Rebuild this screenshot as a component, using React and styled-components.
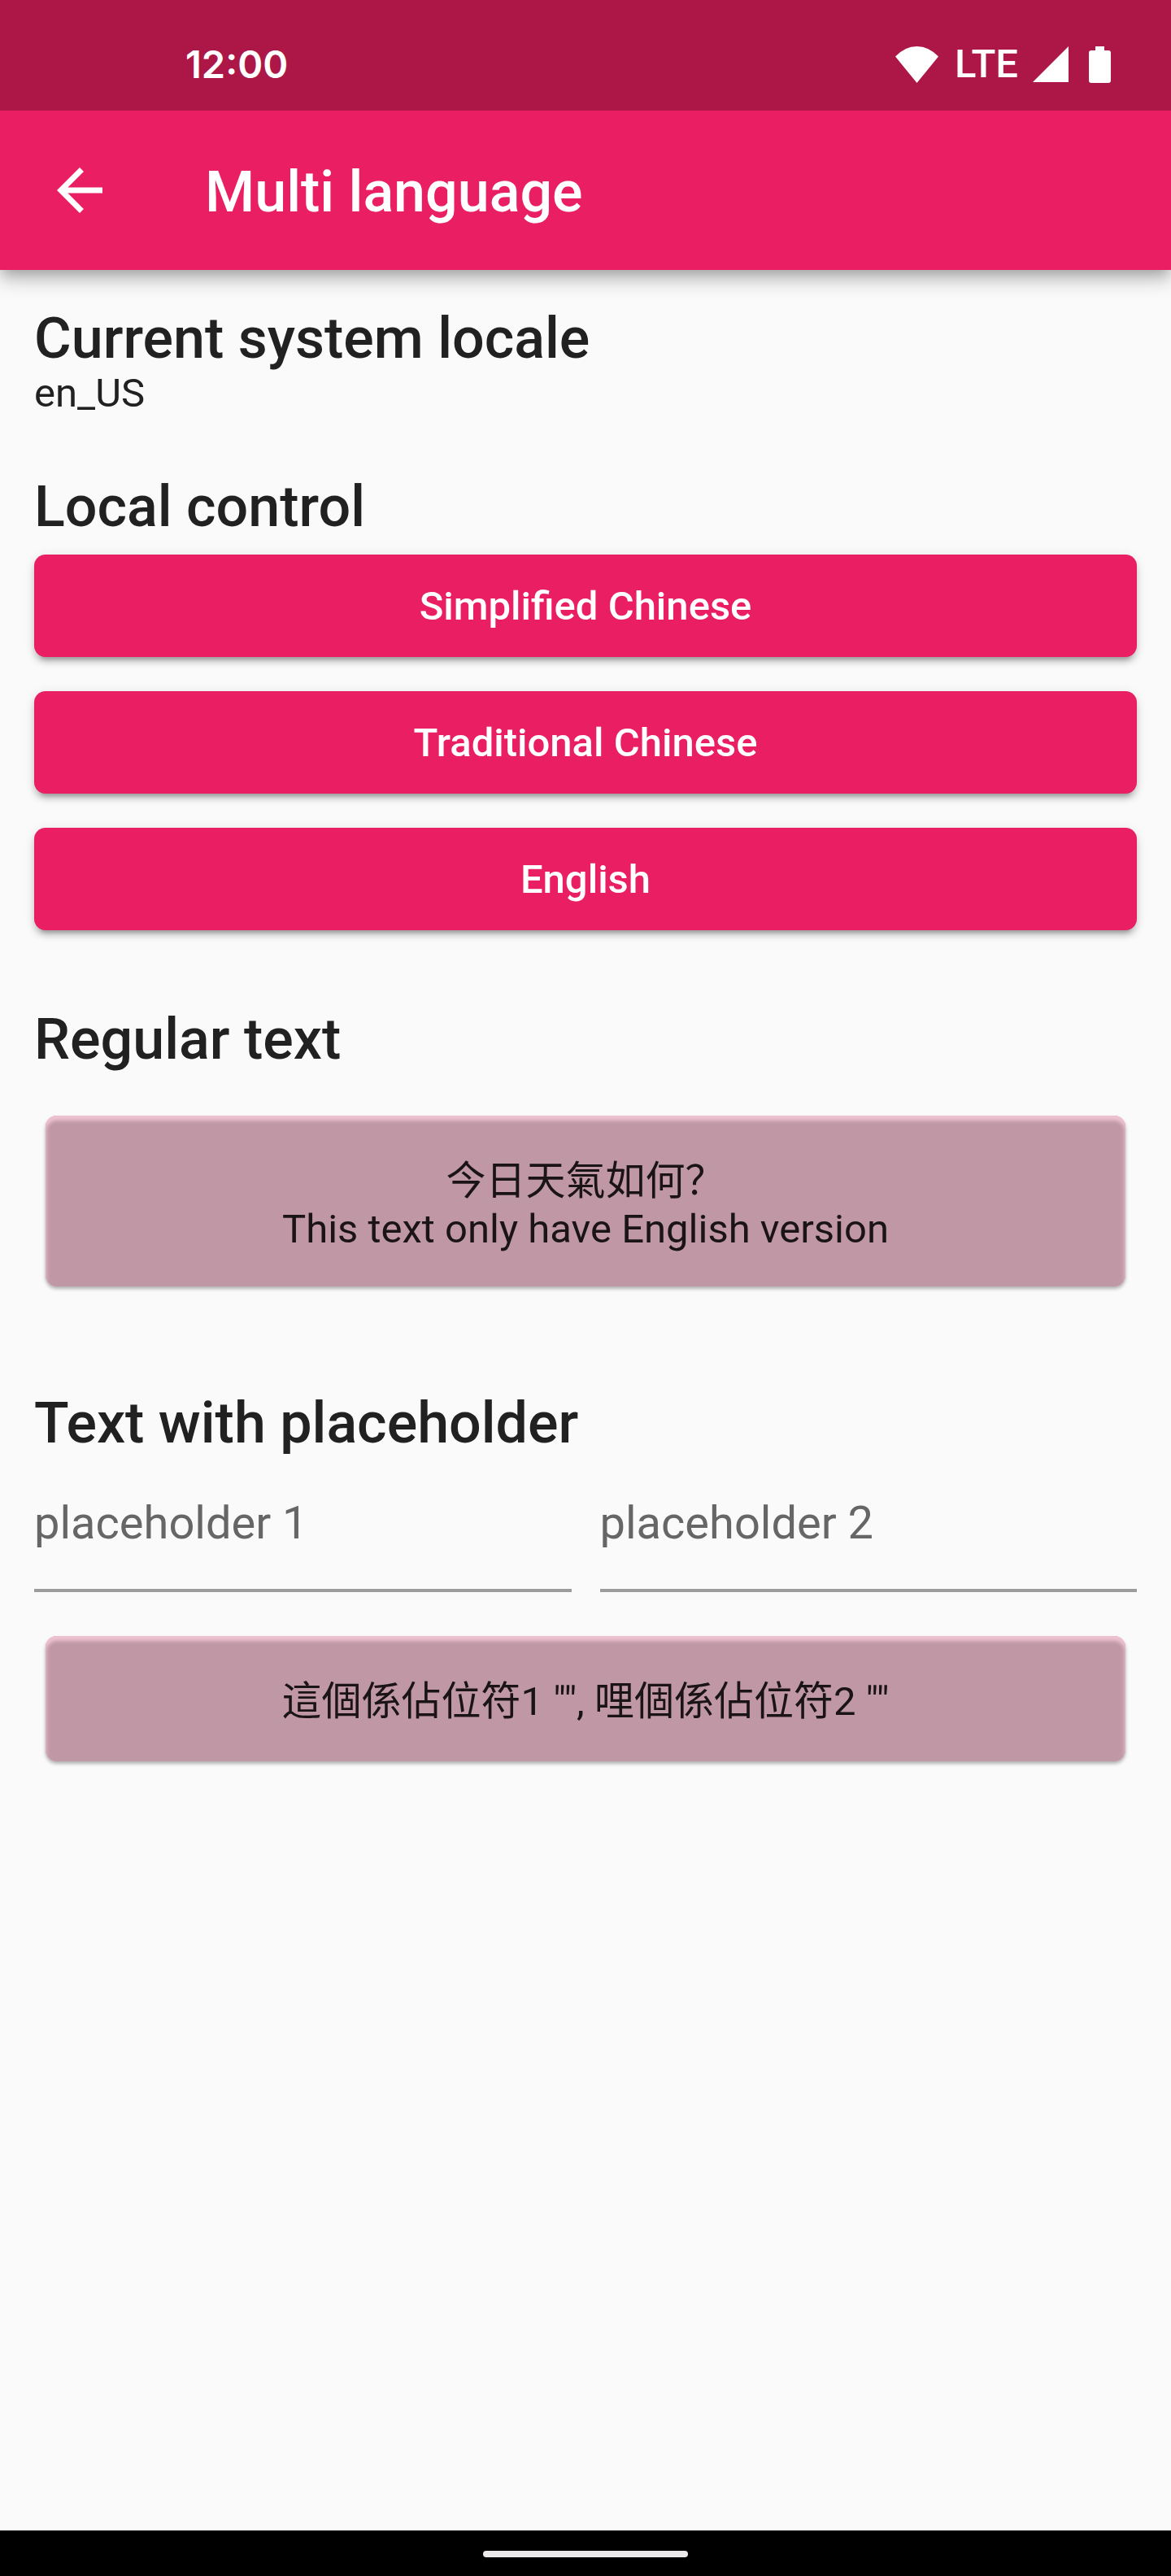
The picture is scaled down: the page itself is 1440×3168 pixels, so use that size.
import React, { useState } from "react";
import styled, { createGlobalStyle } from "styled-components";

const GlobalStyle = createGlobalStyle`
  *, *::before, *::after { box-sizing: border-box; }
  body {
    margin: 0;
    background: #fafafa;
    color: #212121;
    font-family: Roboto, "Noto Sans CJK SC", sans-serif;
  }
`;

const Screen = styled.div`
  display: flex;
  flex-direction: column;
  min-height: 100vh;
`;

const StatusBar = styled.div`
  position: relative;
  z-index: 1;
  display: flex;
  align-items: center;
  justify-content: space-between;
  height: 136px;
  padding: 22px 74px 0 228px;
  background: #ad1747;
  color: #fff;
  font-size: 49px;
  font-weight: 500;
  line-height: 58px;
`;

const Clock = styled.time`
  font-family: Inter, sans-serif;
  font-size: 47px;
  font-weight: 600;
`;

const StatusIcons = styled.div`
  display: flex;
  align-items: center;
  svg { display: block; fill: #fff; }
`;

const Network = styled.span`
  margin: 0 18px 0 20px;
`;

const Battery = styled.svg`
  margin-left: 25px;
`;

const AppBar = styled.header`
  display: flex;
  align-items: center;
  height: 196px;
  padding: 0 56px;
  background: #e91e63;
  color: #fff;
  box-shadow: 0 7px 14px -4px rgba(0, 0, 0, 0.2), 0 14px 18px rgba(0, 0, 0, 0.14),
    0 4px 35px rgba(0, 0, 0, 0.12);
`;

const BackButton = styled.button`
  display: flex;
  margin: 0 112px 0 0;
  padding: 0;
  border: 0;
  background: none;
  color: inherit;
  cursor: pointer;
`;

const Title = styled.h1`
  margin: 0;
  padding-top: 4px;
  font-size: 70px;
  font-weight: 500;
  line-height: 84px;
`;

const Content = styled.main`
  flex: 1;
  padding: 42px;
`;

const Section = styled.section`
  margin-bottom: ${(p) => p.$gap}px;
`;

const Heading = styled.h2`
  margin: 0;
  font-size: 70px;
  font-weight: 500;
  line-height: 84px;
`;

const BodyText = styled.p`
  margin: 0;
  font-size: 49px;
  line-height: 52px;
`;

const ButtonList = styled.div`
  display: flex;
  flex-direction: column;
  gap: 42px;
  margin-top: 17px;
`;

const LanguageButton = styled.button`
  height: 126px;
  padding: 2px 56px 0;
  border: 0;
  border-radius: 14px;
  background: #e91e63;
  color: #fff;
  font: 500 49px/58px Roboto, sans-serif;
  cursor: pointer;
  box-shadow: 0 10px 4px -7px rgba(0, 0, 0, 0.2), 0 7px 7px rgba(0, 0, 0, 0.14),
    0 3px 14px rgba(0, 0, 0, 0.12);
`;

const Card = styled.div`
  min-height: 154px;
  margin: ${(p) => p.$top}px 14px 0;
  padding: 51px 42px 41px;
  border-radius: 14px;
  background: #c098a5;
  color: #1a1416;
  text-align: center;
  box-shadow: inset 0 5px 4px 1px #eec2d2, 0 3px 4px rgba(0, 0, 0, 0.3);
`;

const CardLine = styled.p`
  margin: 0;
  font-size: 49px;
  line-height: 59px;
`;

const Fields = styled.div`
  display: grid;
  grid-template-columns: 1fr 1fr;
  gap: 35px;
`;

const Field = styled.input`
  min-width: 0;
  height: 166px;
  padding: 48px 0;
  border: 0;
  border-bottom: 4px solid #9c9c9c;
  border-radius: 0;
  outline: 0;
  background: none;
  color: #212121;
  font: 400 56px/66px Roboto, sans-serif;
  &::placeholder { color: #666; opacity: 1; }
`;

const NavBar = styled.footer`
  display: flex;
  align-items: center;
  justify-content: center;
  height: 56px;
  background: #000;
`;

const NavHandle = styled.div`
  width: 252px;
  height: 8px;
  margin-top: 2px;
  border-radius: 4px;
  background: #ebe9ea;
`;

const languages = ["Simplified Chinese", "Traditional Chinese", "English"];

export default function App() {
  const [first, setFirst] = useState("");
  const [second, setSecond] = useState("");

  return (
    <Screen>
      <GlobalStyle />
      <StatusBar>
        <Clock>12:00</Clock>
        <StatusIcons>
          <svg width="53" height="45" viewBox="0 0 53 45" aria-hidden="true">
            <path d="M0 12.5Q12 0 26.500 0T53 12.500L26.500 45Z" />
          </svg>
          <Network>LTE</Network>
          <svg width="44" height="44" viewBox="0 0 44 44" aria-hidden="true">
            <path d="M44 0V44H0Z" />
          </svg>
          <Battery width="27" height="45" viewBox="0 0 27 45" aria-hidden="true">
            <path d="M8 0H19V5H24Q27 5 27 8V42Q27 45 24 45H3Q0 45 0 42V8Q0 5 3 5H8Z" />
          </Battery>
        </StatusIcons>
      </StatusBar>
      <AppBar>
        <BackButton type="button" aria-label="Back">
          <svg width="84" height="84" viewBox="0 0 24 24" fill="currentColor" aria-hidden="true">
            <path d="M20 11H7.830l5.590-5.590L12 4l-8 8 8 8 1.410-1.410L7.830 13H20v-2z" />
          </svg>
        </BackButton>
        <Title>Multi language</Title>
      </AppBar>
      <Content>
        <Section $gap={71}>
          <Heading>Current system locale</Heading>
          <BodyText>en_US</BodyText>
        </Section>
        <Section $gap={92}>
          <Heading>Local control</Heading>
          <ButtonList>
            {languages.map((name) => (
              <LanguageButton key={name} type="button">{name}</LanguageButton>
            ))}
          </ButtonList>
        </Section>
        <Section $gap={126}>
          <Heading>Regular text</Heading>
          <Card $top={52}>
            <CardLine>今日天氣如何？</CardLine>
            <CardLine>This text only have English version</CardLine>
          </Card>
        </Section>
        <Section $gap={0}>
          <Heading>Text with placeholder</Heading>
          <Fields>
            <Field
              aria-label="placeholder 1"
              placeholder="placeholder 1"
              value={first}
              onChange={(e) => setFirst(e.target.value)}
            />
            <Field
              aria-label="placeholder 2"
              placeholder="placeholder 2"
              value={second}
              onChange={(e) => setSecond(e.target.value)}
            />
          </Fields>
          <Card $top={54}>
            <CardLine>{`這個係佔位符1 "${first}", 哩個係佔位符2 "${second}"`}</CardLine>
          </Card>
        </Section>
      </Content>
      <NavBar>
        <NavHandle />
      </NavBar>
    </Screen>
  );
}
